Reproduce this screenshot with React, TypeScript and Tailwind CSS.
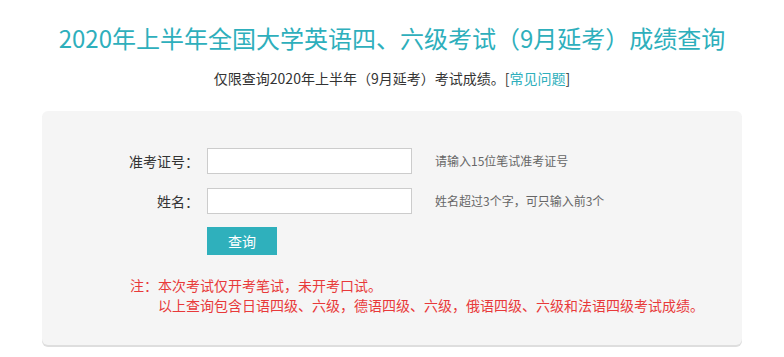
export default function App() {
  return (
    <div className="min-h-[357px] bg-white font-['Noto_Sans_CJK_SC',sans-serif] text-[#333]">
      <h1 className="pt-[22px] text-center text-[24px] leading-[32px] font-normal text-[#2eafbc]">
        2020年上半年全国大学英语四、六级考试（9月延考）成绩查询
      </h1>
      <p className="mt-[14px] text-center text-[14px] leading-[20px]">
        仅限查询2020年上半年（9月延考）考试成绩。[
        <a className="text-[#2eafbc]" href="#">常见问题</a>]
      </p>

      <section className="mx-auto mt-[23px] w-[700px] rounded-[6px] bg-[#f5f5f5] pt-[37px] pb-[30px] shadow-[0_2px_0_#dedede]">
        <div className="flex flex-col gap-[14px]">
          <div className="flex items-center">
            <label className="w-[157px] text-right text-[14px] leading-[20px]">准考证号：</label>
            <input className="ml-[8px] h-[26px] w-[205px] border border-[#ccc] bg-white outline-none" />
            <span className="ml-[23px] text-[12px] text-[#666]">请输入15位笔试准考证号</span>
          </div>
          <div className="flex items-center">
            <label className="w-[157px] text-right text-[14px] leading-[20px]">姓名：</label>
            <input className="ml-[8px] h-[26px] w-[205px] border border-[#ccc] bg-white outline-none" />
            <span className="ml-[23px] text-[12px] text-[#666]">姓名超过3个字，可只输入前3个</span>
          </div>
        </div>

        <div className="mt-[13px] pl-[165px]">
          <button className="h-[28px] w-[70px] bg-[#2fb0bc] text-[14px] text-white">查询</button>
        </div>

        <div className="mt-[20px] pl-[88px] text-[14px] leading-[20px] text-[#e8393a]">
          <p>注：本次考试仅开考笔试，未开考口试。</p>
          <p className="pl-[28px]">以上查询包含日语四级、六级，德语四级、六级，俄语四级、六级和法语四级考试成绩。</p>
        </div>
      </section>
    </div>
  );
}
